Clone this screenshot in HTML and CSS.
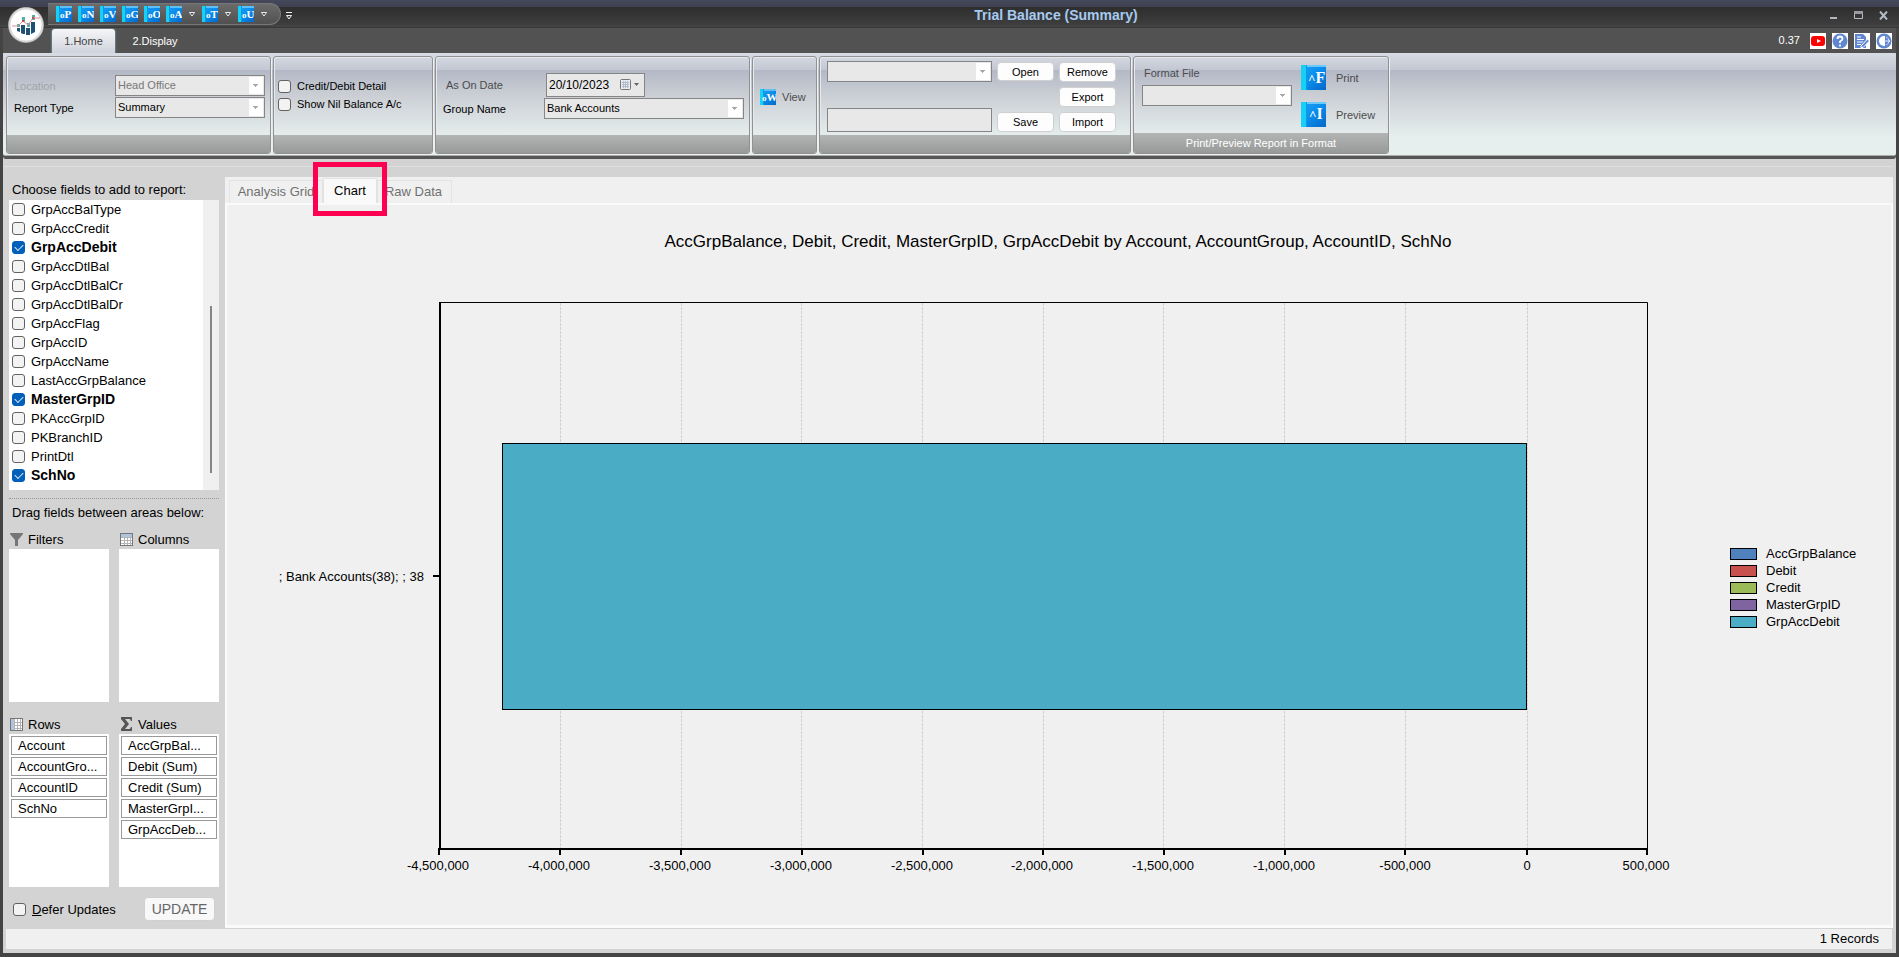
FILE: index.html
```html
<!DOCTYPE html>
<html lang="en">
<head>
<meta charset="utf-8">
<title>Trial Balance (Summary)</title>
<link rel="stylesheet" href="styles.css">
</head>
<body>
<svg class="defs" width="0" height="0" aria-hidden="true">
  <defs>
    <linearGradient id="book" x1="0" y1="0" x2="1" y2="1"><stop offset="0" stop-color="#1ba4f8"/><stop offset="0.5" stop-color="#0a8cec"/><stop offset="1" stop-color="#0568c8"/></linearGradient>
    <symbol id="book-base" viewBox="0 0 16 16"><rect width="16" height="16" fill="url(#book)"/><rect width="4" height="16" fill="#16d0f8"/><rect x="3" width="1" height="16" fill="#0d9be0"/><rect x="4" width="12" height="2" fill="#5fc0f8"/></symbol>
    <symbol id="big-book" viewBox="0 0 25 25"><rect width="25" height="25" fill="url(#book)"/><rect width="6" height="25" fill="#16d0f8"/><path d="M6 1h19" stroke="#6cc8fa" stroke-width="2"/><path d="M5.500 0v25" stroke="#0d9be0"/></symbol>
    <symbol id="grid-base" viewBox="0 0 13 13"><rect x="0.5" y="0.5" width="12" height="12" fill="#fff" stroke="#767676"/><path d="M1 4.500H12M1 7.500H12M1 10.500H12M4.500 1V12M7.500 1V12M10.500 1V12" stroke="#b4b4b4"/></symbol>
  </defs>
</svg>
<div class="window">
  <header class="titlebar">
    <button class="orb" aria-label="Application menu">
      <svg width="38" height="38" viewBox="0 0 38 38"><circle cx="19" cy="19" r="18" fill="#8c8c8c"/><circle cx="19" cy="19" r="16.500" fill="#fff" stroke="#d8d8d8" stroke-width="2"/><path d="M10 22h3v4l-3-1zM14 19h4v9h-2l-2-1zM19 22h4v7h-4zM24 16h4v10l-4 2z" fill="#1f5076"/><path d="M15 11h3v5h-3zM20 17h3v4h-3zM25 9h3v5h-3zM10 18h3v3h-3z" fill="#4fb0ae"/><path d="M5 20h6l5-5 5 4 5-7h7" fill="none" stroke="#e68a90"/><circle cx="16" cy="15" r="1" fill="#d33"/><circle cx="26" cy="12" r="1" fill="#d33"/></svg>
    </button>
    <nav class="quick" aria-label="Quick access">
      <button class="book"><svg width="16" height="16"><use href="#book-base"/><text x="4" y="12" class="letter"><tspan class="tiny">o</tspan>P</text></svg></button>
      <button class="book"><svg width="16" height="16"><use href="#book-base"/><text x="4" y="12" class="letter"><tspan class="tiny">o</tspan>N</text></svg></button>
      <button class="book"><svg width="16" height="16"><use href="#book-base"/><text x="4" y="12" class="letter"><tspan class="tiny">o</tspan>V</text></svg></button>
      <button class="book"><svg width="16" height="16"><use href="#book-base"/><text x="4" y="12" class="letter"><tspan class="tiny">o</tspan>G</text></svg></button>
      <button class="book"><svg width="16" height="16"><use href="#book-base"/><text x="4" y="12" class="letter"><tspan class="tiny">o</tspan>O</text></svg></button>
      <button class="book drop"><svg width="16" height="16"><use href="#book-base"/><text x="4" y="12" class="letter"><tspan class="tiny">o</tspan>A</text></svg><svg width="6" height="5"><path d="M0.500 0.500h5L3 4z" class="caret"/></svg></button>
      <button class="book drop"><svg width="16" height="16"><use href="#book-base"/><text x="4" y="12" class="letter"><tspan class="tiny">o</tspan>T</text></svg><svg width="6" height="5"><path d="M0.500 0.500h5L3 4z" class="caret"/></svg></button>
      <button class="book drop"><svg width="16" height="16"><use href="#book-base"/><text x="4" y="12" class="letter"><tspan class="tiny">o</tspan>U</text></svg><svg width="6" height="5"><path d="M0.500 0.500h5L3 4z" class="caret"/></svg></button>
    </nav>
    <button class="more" aria-label="Customize"><svg width="6" height="8"><path d="M0 0.500h6" stroke="#eee"/><path d="M0.500 3.500h5L3 7z" class="caret"/></svg></button>
    <h1 class="title">Trial Balance (Summary)</h1>
    <div class="controls">
      <button aria-label="Minimize"><svg width="9" height="9"><path d="M1 7h7" stroke="#b4b4bc" stroke-width="2"/></svg></button>
      <button aria-label="Maximize"><svg width="9" height="9"><path d="M0 1.500h9" stroke="#9a9aa2" stroke-width="3"/><path d="M0.500 3v4.500h8V3" fill="none" stroke="#b4bcc8"/></svg></button>
      <button aria-label="Close"><svg width="9" height="9"><path d="M1 0.500l7 8M8 0.500l-7 8" stroke="#b4bcc4" stroke-width="2"/></svg></button>
    </div>
  </header>
  <div class="tabstrip">
    <button class="rtab active">1.Home</button>
    <button class="rtab">2.Display</button>
    <div class="tools">
      <span class="version">0.37</span>
      <button aria-label="Videos"><svg width="16" height="16"><rect width="16" height="16" fill="#fff"/><rect x="1" y="3" width="14" height="10" rx="3" fill="#f00"/><path d="M7 6l4 2-4 2z" fill="#fff"/></svg></button>
      <button aria-label="Help"><svg width="16" height="16"><rect width="16" height="16" fill="#fff"/><circle cx="8" cy="8" r="7.500" fill="#6088d0"/><path d="M5.500 6q0-2.500 2.500-2.500T10.500 6Q10.500 7 8 8.500V10M8 11.500v2" fill="none" stroke="#fff" stroke-width="1.800"/></svg></button>
      <button aria-label="Notes"><svg width="16" height="16"><rect width="16" height="16" fill="#fff"/><path d="M1 1h8l3 3v11H1z" fill="#6088d0"/><path d="M3 4h4M3 6.500h7M3 9h6M3 11.500h4" stroke="#fff"/><path d="M7 13l6.500-7 2 2L9 14.500H7z" fill="#6088d0" stroke="#fff"/></svg></button>
      <button aria-label="Sign out"><svg width="16" height="16"><rect width="16" height="16" fill="#fff"/><circle cx="8" cy="8" r="7.500" fill="#6088d0"/><path d="M8 3a5 5 0 000 10h1V3z" fill="#fff"/><path d="M10 4q3 1 3 4t-3 4" stroke="#b8caee" fill="none"/><path d="M8 8h6M12 6l2 2-2 2" stroke="#dce6f8" fill="none"/></svg></button>
    </div>
  </div>
  <section class="ribbon" aria-label="Ribbon">
    <div class="group g-report">
      <div class="body form">
        <label class="faint" for="loc">Location</label><select id="loc" class="combo" disabled><option>Head Office</option></select>
        <label for="rt">Report Type</label><select id="rt" class="combo"><option>Summary</option></select>
      </div>
      <div class="caption"></div>
    </div>
    <div class="group g-checks">
      <div class="body checks">
        <label><input type="checkbox" class="check">Credit/Debit Detail</label>
        <label><input type="checkbox" class="check">Show Nil Balance A/c</label>
      </div>
      <div class="caption"></div>
    </div>
    <div class="group g-date">
      <div class="body dateform">
        <label class="muted" for="date">As On Date</label>
        <div class="datebox"><input id="date" value="20/10/2023"><button aria-label="Pick date"><svg width="20" height="12"><rect x="0.500" y="0.500" width="10" height="10" rx="1" fill="#e8ecf4" stroke="#777"/><path d="M2 3.500h7M2 5.500h7M2 7.500h7M3.500 2v7M5.500 2v7M7.500 2v7" stroke="#b4bccb"/><path d="M14 4h5l-2.500 3z" fill="#666"/></svg></button></div>
        <label for="grp">Group Name</label><select id="grp" class="combo"><option>Bank Accounts</option></select>
      </div>
      <div class="caption"></div>
    </div>
    <div class="group g-view">
      <div class="body viewbody"><button class="tool"><svg width="16" height="16"><use href="#book-base"/><text x="2" y="12" class="letter"><tspan class="tiny">o</tspan>W</text></svg>View</button></div>
      <div class="caption"></div>
    </div>
    <div class="group g-saved">
      <div class="body saved">
        <select class="combo" aria-label="Saved layout"><option></option></select><button class="btn">Open</button><button class="btn">Remove</button>
        <button class="btn export">Export</button>
        <input class="field" aria-label="Layout name"><button class="btn">Save</button><button class="btn">Import</button>
      </div>
      <div class="caption"></div>
    </div>
    <div class="group g-print">
      <div class="body print">
        <div class="format"><label class="muted" for="ff">Format File</label><select id="ff" class="combo"><option></option></select></div>
        <div class="actions">
          <button class="tool"><svg width="25" height="25"><use href="#big-book"/><text x="7" y="18" class="big"><tspan class="hat">^</tspan>F</text></svg>Print</button>
          <button class="tool"><svg width="25" height="25"><use href="#big-book"/><text x="8" y="17" class="big"><tspan class="hat">^</tspan>I</text></svg>Preview</button>
        </div>
      </div>
      <div class="caption">Print/Preview Report in Format</div>
    </div>
  </section>
  <main class="work">
    <aside class="sidebar">
      <h2 class="hint">Choose fields to add to report:</h2>
      <div class="fieldbox">
        <div class="fields">
          <label><input type="checkbox" class="check">GrpAccBalType</label>
          <label><input type="checkbox" class="check">GrpAccCredit</label>
          <label class="on"><input type="checkbox" class="check" checked>GrpAccDebit</label>
          <label><input type="checkbox" class="check">GrpAccDtlBal</label>
          <label><input type="checkbox" class="check">GrpAccDtlBalCr</label>
          <label><input type="checkbox" class="check">GrpAccDtlBalDr</label>
          <label><input type="checkbox" class="check">GrpAccFlag</label>
          <label><input type="checkbox" class="check">GrpAccID</label>
          <label><input type="checkbox" class="check">GrpAccName</label>
          <label><input type="checkbox" class="check">LastAccGrpBalance</label>
          <label class="on"><input type="checkbox" class="check" checked>MasterGrpID</label>
          <label><input type="checkbox" class="check">PKAccGrpID</label>
          <label><input type="checkbox" class="check">PKBranchID</label>
          <label><input type="checkbox" class="check">PrintDtl</label>
          <label class="on"><input type="checkbox" class="check" checked>SchNo</label>
        </div>
        <div class="scroll"><div class="thumb"></div></div>
      </div>
      <h2 class="hint drag">Drag fields between areas below:</h2>
      <div class="areas">
        <section class="area"><h3><svg width="13" height="13"><path d="M0 0h13v1L8 7v6H5V7L0 1z" fill="#767676"/></svg>Filters</h3><div class="well"></div></section>
        <section class="area"><h3><svg width="13" height="13"><use href="#grid-base"/><path d="M1 2.500h11" stroke="#b0c4dc" stroke-width="3"/></svg>Columns</h3><div class="well"></div></section>
        <section class="area"><h3><svg width="13" height="13"><use href="#grid-base"/><path d="M2.500 1v11" stroke="#b0c4dc" stroke-width="3"/></svg>Rows</h3><div class="well"><button>Account</button><button>AccountGro...</button><button>AccountID</button><button>SchNo</button></div></section>
        <section class="area"><h3><svg width="13" height="14"><path d="M1 0h11v4h-1l-1-2H5l4 5-4 5h5l1-2h1v4H1v-2l4-5-4-5z" fill="#555"/></svg>Values</h3><div class="well"><button>AccGrpBal...</button><button>Debit (Sum)</button><button>Credit (Sum)</button><button>MasterGrpI...</button><button>GrpAccDeb...</button></div></section>
      </div>
      <div class="defer"><label><input type="checkbox" class="check"><span><u>D</u>efer Updates</span></label><button class="btn update" disabled>UPDATE</button></div>
    </aside>
    <section class="view">
      <div class="tabs" role="tablist">
        <button role="tab" class="tab grid-tab">Analysis Grid</button>
        <button role="tab" class="tab current" aria-selected="true">Chart</button>
        <button role="tab" class="tab raw-tab">Raw Data</button>
      </div>
      <div class="panel">
        <svg class="chart" viewBox="0 0 1664 720" role="img" aria-label="Trial balance chart">
          <text x="831" y="42" class="ctitle" text-anchor="middle">AccGrpBalance, Debit, Credit, MasterGrpID, GrpAccDebit by Account, AccountGroup, AccountID, SchNo</text>
          <path class="gridline" d="M333.500 98V643M454.500 98V643M574.500 98V643M695.500 98V643M816.500 98V643M936.500 98V643M1057.500 98V643M1178.500 98V643M1300.500 98V643"/>
          <path class="frame" d="M213 97.500H1420.500V643"/>
          <path class="axis" d="M213 97V644M206 371H213M211 644H1421M212 644v6M333 644v6M454 644v6M575 644v6M696 644v6M816 644v6M937 644v6M1058 644v6M1178 644v6M1300 644v6M1420 644v6"/>
          <rect class="bar" x="275.500" y="238.500" width="1024" height="266"/>
          <text x="197" y="376" text-anchor="end">; Bank Accounts(38); ; 38</text>
          <g text-anchor="middle">
            <text x="211" y="665">-4,500,000</text><text x="332" y="665">-4,000,000</text><text x="453" y="665">-3,500,000</text><text x="574" y="665">-3,000,000</text><text x="695" y="665">-2,500,000</text><text x="815" y="665">-2,000,000</text><text x="936" y="665">-1,500,000</text><text x="1057" y="665">-1,000,000</text><text x="1178" y="665">-500,000</text><text x="1300" y="665">0</text><text x="1419" y="665">500,000</text>
          </g>
          <g class="keys">
            <rect x="1503.500" y="343.500" width="26" height="11" fill="#4f81bd"/><rect x="1503.500" y="360.500" width="26" height="11" fill="#c8504d"/><rect x="1503.500" y="377.500" width="26" height="11" fill="#9bbb59"/><rect x="1503.500" y="394.500" width="26" height="11" fill="#8064a2"/><rect x="1503.500" y="411.500" width="26" height="11" fill="#4bacc6"/>
          </g>
          <text x="1539" y="353">AccGrpBalance</text><text x="1539" y="370">Debit</text><text x="1539" y="387">Credit</text><text x="1539" y="404">MasterGrpID</text><text x="1539" y="421">GrpAccDebit</text>
        </svg>
      </div>
      <div class="marker"></div>
    </section>
  </main>
  <footer class="status">1 Records</footer>
</div>
</body>
</html>
```
FILE: styles.css
```css
* { box-sizing: border-box; }
body { margin: 0; background: #404040; color: #000; font: 13px/19px "Liberation Sans", Arial, sans-serif; }
button, input, select { font: inherit; color: inherit; margin: 0; }
button { padding: 0; border: 0; background: none; }
h1, h2, h3 { margin: 0; font-size: inherit; font-weight: normal; }
svg { display: block; flex: none; }
.defs { position: absolute; }
.window { display: flex; flex-direction: column; min-height: 100vh; border: solid #444; border-width: 0 3px 4px; background: #d3d3d3; }

.titlebar { position: relative; display: flex; height: 28px; margin: 0 -3px; padding-left: 48px; background: linear-gradient(#45485a 0, #3f4252 7px, #2e2e2e 7px, #3e3e3e 25px, #4c4c4c 26px, #383838 27px); }
.orb { position: absolute; left: 7px; top: 6px; z-index: 2; }
.quick { display: flex; align-items: center; gap: 6px; width: 233px; height: 22px; margin-top: 3px; padding: 0 0 0 8px; border: 1px solid #777; border-left: 0; border-radius: 0 11px 11px 0; background: linear-gradient(#6b6b6b, #505050); }
.drop { display: flex; align-items: center; gap: 7px; margin-right: 1px; }
.letter { font: bold 11px "Liberation Serif", serif; fill: #fff; }
.tiny { font-size: 9px; }
.caret { fill: #444; stroke: #eee; }
.more { margin: 3px 0 0 5px; }
.title { position: absolute; left: 0; right: 0; top: 6px; pointer-events: none; padding-left: 213px; text-align: center; font-size: 14px; font-weight: bold; color: #a6caf0; }
.controls { display: flex; gap: 16px; margin: 2px 11px 0 auto; }

.tabstrip { display: flex; align-items: flex-end; height: 25px; padding-left: 49px; background: #525252; color: #fff; font-size: 11px; }
.rtab { width: 63px; height: 24px; padding-top: 1px; border-radius: 3px 3px 0 0; }
.rtab.active { background: linear-gradient(#f6f6f8, #cfd3dc); color: #444; box-shadow: 0 0 2px #8fdfe8; }
.rtab + .rtab { width: 80px; }
.tools { display: flex; align-items: center; gap: 6px; height: 25px; margin-left: auto; padding-right: 4px; }
.version { margin-right: 4px; }

.ribbon { display: flex; gap: 2px; height: 103px; padding: 3px 3px 1px; border-radius: 3px; border-bottom: 1px solid #aaa; background: linear-gradient(#d8dce4, #c3c7d2 17px, #b3b8c6 17px, #cdd1d6 45px, #e6efee 85px); font-size: 11px; line-height: 16px; box-shadow: 0 3px #555; }
.group { display: flex; flex-direction: column; border: 1px solid #8f9193; border-radius: 3px; box-shadow: inset 1px 1px #e6e8ee, 1px 1px #eef0f2; overflow: hidden; }
.body { height: 78px; }
.caption { flex: 1; background: linear-gradient(#b2b5b4, #989a99); color: #fff; text-align: center; line-height: 20px; }
.g-report { width: 265px; }
.g-checks { width: 160px; }
.g-date { width: 315px; }
.g-view { width: 65px; }
.g-saved { width: 312px; }
.g-print { width: 256px; }
.form { display: grid; grid-template-columns: 101px 150px; align-content: start; align-items: center; gap: 1px 0; padding: 18px 0 0 7px; }
.faint { color: #a0a3a8; }
.muted { color: #4c4c4c; }
.combo { appearance: none; height: 21px; padding: 0 18px 2px 2px; border: 1px solid #858585; border-radius: 0; background: linear-gradient(#a8a8a8, #a8a8a8) no-repeat right 6px top 8px / 5px 1px, linear-gradient(#a8a8a8, #a8a8a8) no-repeat right 7px top 9px / 3px 1px, linear-gradient(#a8a8a8, #a8a8a8) no-repeat right 8px top 10px / 1px 1px, linear-gradient(#fff, #fff) no-repeat right 1px top 1px / 14px 17px, #e8e8e8; }
.combo:disabled { color: #777; opacity: 1; }
.check { appearance: none; flex: none; width: 13px; height: 13px; border: 1px solid #626262; border-radius: 3px; background: #f3f3f3; }
.check:checked { display: grid; place-items: center; border-color: #005fb8; background: #005fb8; }
.check:checked::after { content: ""; width: 7px; height: 4px; border: solid #d5e8fa; border-width: 0 0 1px 1px; transform: rotate(-45deg); margin-bottom: 2px; }
.checks { display: grid; align-content: start; gap: 2px; padding: 21px 0 0 4px; }
.checks label { display: flex; align-items: center; gap: 6px; }
.dateform { display: grid; grid-template-columns: 101px 200px; align-content: start; align-items: center; gap: 1px 0; padding: 16px 0 0 7px; }
.dateform .muted { padding-left: 3px; }
.datebox { display: flex; align-items: center; width: 99px; height: 24px; margin-left: 2px; padding-left: 2px; border: 1px solid #858585; background: #e8e8e8; }
.datebox input { width: 71px; padding: 0; border: 0; background: none; font-size: 12px; }
.viewbody { padding: 32px 0 0 7px; }
.tool { display: flex; align-items: center; gap: 6px; color: #4c4c4c; }
.saved { display: grid; grid-template-columns: 165px 57px 57px; gap: 4px 5px; align-content: start; padding: 4px 0 0 7px; }
.saved .export { grid-column: 3; }
.saved .btn { margin-top: 1px; height: 19px; }
.saved .btn ~ .btn { height: 20px; }
.btn { height: 20px; border: 1px solid #d0d0d0; border-radius: 4px; background: #fdfdfd; }
.field { height: 24px; margin-top: -3px; border: 1px solid #858585; background: #e8e8e8; }
.print { display: flex; gap: 9px; padding: 8px 0 0 8px; }
.format { display: grid; align-content: start; gap: 4px; width: 150px; }
.format label { padding-left: 2px; }
.actions { display: grid; align-content: start; gap: 12px; }
.actions .tool { gap: 10px; }
.hat { font-size: 13px; }
.big { font: bold 16px "Liberation Serif", serif; fill: #fff; }

.work { display: flex; flex: 1; padding-top: 21px; margin-right: 3px; background: linear-gradient(#dedede, #dedede) no-repeat 0 10px / 100% 1px; }
.sidebar { width: 222px; padding: 3px 6px 0; }
.hint { padding-left: 3px; height: 20px; line-height: 20px; }
.fieldbox { display: flex; height: 290px; background: #fff; }
.fields { flex: 1; padding-left: 3px; }
.fields label { display: flex; align-items: center; gap: 6px; height: 19px; }
.fields .on { font-weight: bold; font-size: 14px; }
.scroll { display: flex; justify-content: center; align-items: end; width: 16px; padding-bottom: 17px; background: #f0f0f0; }
.thumb { width: 2px; height: 167px; background: #868686; }
.hint.drag { margin-top: 8px; padding-top: 4px; height: 31px; border-top: 1px dotted #999; }
.areas { display: grid; grid-template-columns: 1fr 1fr; gap: 12px 10px; }
.area h3 { display: flex; align-items: center; gap: 5px; height: 20px; padding-left: 1px; }
.well { display: grid; align-content: start; gap: 2px; height: 153px; padding: 2px; background: #fff; }
.well button { height: 19px; padding-left: 6px; border: 1px solid #999; background: #fff; text-align: left; line-height: 17px; }
.defer { display: flex; align-items: center; justify-content: space-between; padding: 10px 4px 0; }
.defer label { display: flex; align-items: center; gap: 6px; }
.update { width: 71px; height: 24px; color: #666; font-size: 14px; background: #f8f8f8; }

.view { position: relative; display: flex; flex: 1; flex-direction: column; min-width: 0; background: #f0f0f0; }
.tabs { display: flex; align-items: flex-end; height: 26px; padding-left: 4px; }
.tab { height: 23px; border: 1px solid #e3e3e3; border-bottom: 0; color: #707070; line-height: 20px; }
.grid-tab { width: 94px; padding: 0; }
.current { width: 54px; height: 25px; background: #f9f9f9; color: #000; }
.raw-tab { width: 75px; padding-right: 2px; }
.panel { flex: 1; border: 2px solid #fafafa; border-bottom-width: 3px; }
.chart { width: 100%; height: auto; font-size: 13px; }
.ctitle { font-size: 17px; }
.gridline { stroke: #d0d0d0; stroke-dasharray: 3 1; }
.frame { fill: none; stroke: #000; }
.axis { fill: none; stroke: #000; stroke-width: 2; }
.bar { fill: #4bacc6; stroke: #000; }
.keys rect { stroke: #000; }
.marker { position: absolute; left: 88px; top: -15px; width: 74px; height: 54px; border: 5px solid #ff0050; }
.status { height: 20px; margin: 1px 4px 4px 3px; padding-right: 13px; background: #f0f0f0; text-align: right; line-height: 20px; }
```
